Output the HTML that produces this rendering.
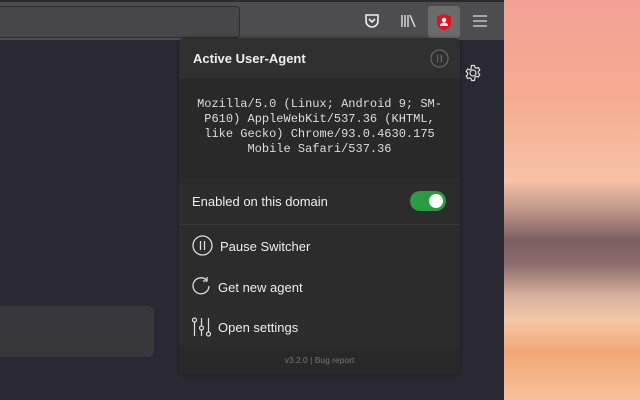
<!DOCTYPE html>
<html><head><style>
*{margin:0;padding:0;box-sizing:border-box}
body{width:640px;height:400px;overflow:hidden;position:relative;background:#2a2933;font-family:"Liberation Sans",sans-serif}
.bg{position:absolute;left:504px;top:0;width:136px;height:400px;background:linear-gradient(180deg,#f2a194 0%,#f6a990 22%,#f8c2a4 45%,#c39a8c 52%,#7c5e62 60%,#8c6c6c 66%,#d9b09e 74%,#f4c8a8 80%,#f4a675 88%,#f8c19c 100%)}
.tb{position:absolute;left:0;top:0;width:504px;height:40px;background:#4d4d4f;border-top:2px solid #2a2a2a}
.url{position:absolute;left:-10px;top:4px;width:250px;height:32px;background:#474749;border:1px solid #2e2e30;border-radius:4px}
.sel{position:absolute;left:428px;top:4px;width:32px;height:32px;background:#6b6b6b;border-radius:3px}
.pop{position:absolute;left:179px;top:38px;width:281px;height:337px;background:#2c2c2c;border-radius:6px;overflow:hidden;color:#eee;box-shadow:0 0 4px #0006}
.hd{height:40px;background:#303030;font-weight:bold;font-size:13px;padding:13px 14px}
.ua{height:100px;background:#292929;font-family:"Liberation Mono",monospace;font-size:12px;text-align:center;line-height:15px;padding-top:19px;color:#ddd}
.row{position:absolute;left:13px;font-size:13px;color:#eee}
.ft{position:absolute;left:0;top:309px;width:281px;height:28px;background:#282828;font-size:8.5px;color:#777;text-align:center;line-height:26px}
.card{position:absolute;left:-10px;top:306px;width:164px;height:51px;background:#38383c;border-radius:6px}
</style></head><body>
<div class="bg"></div>
<div class="tb">
<div class="url"></div>
<svg style="position:absolute;left:364px;top:11px" width="16" height="16" viewBox="0 0 16 16"><path d="M2 2h12v6a6 6 0 0 1-12 0z" fill="none" stroke="#eee" stroke-width="1.6"/><path d="M5 6l3 3 3-3" fill="none" stroke="#eee" stroke-width="1.6"/></svg>
<svg style="position:absolute;left:401px;top:11px" width="16" height="16" viewBox="0 0 16 16"><path d="M1 2v12M4 2v12M7 2v12M9 2l5 12" stroke="#ddd" stroke-width="1.4"/></svg>
<div class="sel"></div>
<svg style="position:absolute;left:436px;top:11px" width="16" height="18" viewBox="0 0 16 18"><path d="M8 1l7 2.5v6c0 4-3.5 6.5-7 8-3.5-1.5-7-4-7-8v-6z" fill="#e8101a"/><circle cx="8" cy="7" r="2.2" fill="#fff"/><path d="M4 13c0-2.5 1.8-3.5 4-3.5s4 1 4 3.5z" fill="#fff"/></svg>
<svg style="position:absolute;left:473px;top:13px" width="14" height="12" viewBox="0 0 14 12"><path d="M0 1h14M0 6h14M0 11h14" stroke="#ddd" stroke-width="1.3"/></svg>
</div>
<svg style="position:absolute;left:464px;top:64px" width="18" height="18" viewBox="0 0 24 24"><path d="M12 8a4 4 0 1 0 0 8 4 4 0 0 0 0-8z M10 2h4l.6 2.6 2 1 2.5-1 2 3.4-2 1.8v2.4l2 1.8-2 3.4-2.5-1-2 1L14 22h-4l-.6-2.6-2-1-2.5 1-2-3.4 2-1.8v-2.4l-2-1.8 2-3.4 2.5 1 2-1z" fill="none" stroke="#ddd" stroke-width="1.6" stroke-linejoin="round"/></svg>
<div class="card"></div>
<div class="pop">
<div class="hd">Active User-Agent</div>
<svg style="position:absolute;left:251px;top:11px" width="19" height="19" viewBox="0 0 20 20"><circle cx="10" cy="10" r="9" fill="none" stroke="#666" stroke-width="1.3"/><path d="M8 6v8M12 6v8" stroke="#666" stroke-width="1.3"/></svg>
<div class="ua">Mozilla/5.0 (Linux; Android 9; SM-<br>P610) AppleWebKit/537.36 (KHTML,<br>like Gecko) Chrome/93.0.4630.175<br>Mobile Safari/537.36</div>
<div class="row" style="top:156px">Enabled on this domain</div>
<div style="position:absolute;left:231px;top:153px;width:36px;height:20px;background:#2a9c40;border-radius:10px"><div style="position:absolute;right:3px;top:3px;width:14px;height:14px;background:#fff;border-radius:50%"></div></div>
<div style="position:absolute;left:0;top:186px;width:281px;height:1px;background:#3a3a3a"></div>
<svg style="position:absolute;left:13px;top:197px" width="21" height="21" viewBox="0 0 21 21"><circle cx="10.5" cy="10.5" r="9.5" fill="none" stroke="#ddd" stroke-width="1.3"/><path d="M8.5 6v9M12.5 6v9" stroke="#ddd" stroke-width="1.3"/></svg>
<div class="row" style="left:41px;top:201px">Pause Switcher</div>
<svg style="position:absolute;left:12px;top:238px" width="20" height="20" viewBox="0 0 20 20"><path d="M16 4.5A8 8 0 1 0 18 10" fill="none" stroke="#ddd" stroke-width="1.3"/><path d="M16 1v4h-4" fill="none" stroke="#ddd" stroke-width="1.3"/></svg>
<div class="row" style="left:39px;top:242px">Get new agent</div>
<svg style="position:absolute;left:13px;top:279px" width="19" height="20" viewBox="0 0 19 20"><path d="M2.5 5v14M9.5 1v8M9.5 13v6M16.5 1v14" stroke="#ddd" stroke-width="1.2"/><circle cx="2.5" cy="3" r="2" fill="none" stroke="#ddd" stroke-width="1.2"/><circle cx="9.5" cy="11" r="2" fill="none" stroke="#ddd" stroke-width="1.2"/><circle cx="16.5" cy="17" r="2" fill="none" stroke="#ddd" stroke-width="1.2"/></svg>
<div class="row" style="left:39px;top:282px">Open settings</div>
<div class="ft">v3.2.0 | Bug report</div>
</div>
</body></html>
